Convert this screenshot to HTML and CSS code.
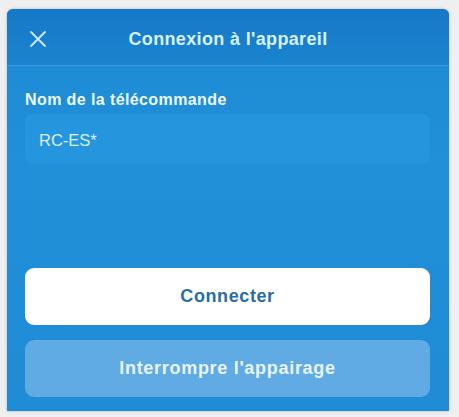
FILE: index.html
```html
<!DOCTYPE html>
<html lang="fr">
<head>
<meta charset="utf-8">
<link rel="stylesheet" href="styles.css">
</head>
<body>
<div class="panel">
  <header class="header">
    <button class="close" aria-label="Fermer">
      <svg width="18" height="18" viewBox="0 0 18 18"><path d="M2 2L16 16M16 2L2 16" stroke="#cfeaff" stroke-width="1.8" stroke-linecap="round"/></svg>
    </button>
    <h1 class="title">Connexion à l'appareil</h1>
  </header>
  <main class="body">
    <label class="label">Nom de la télécommande</label>
    <div class="field">RC-ES*</div>
    <div class="actions">
      <button class="btn btn-primary">Connecter</button>
      <button class="btn btn-secondary">Interrompre l'appairage</button>
    </div>
  </main>
</div>
</body>
</html>
```
FILE: styles.css
```css
* { box-sizing: border-box; }
html, body { margin: 0; padding: 0; }
body {
  width: 459px;
  height: 417px;
  background: #efefef;
  font-family: "Liberation Sans", Arial, sans-serif;
  padding: 9px 10px 6px 7px;
}
.panel {
  height: 402px;
  background: linear-gradient(#1d8ad5, #2190d8 40%, #1f8cd5);
  border-radius: 6px 6px 0 0;
  display: flex;
  flex-direction: column;
  overflow: hidden;
  box-shadow: 0 0 3px rgba(0,0,0,0.25);
}
.header {
  height: 57px;
  background: linear-gradient(#1679c8, #1a84cf);
  border-bottom: 1px solid #3b9ae0;
  display: flex;
  align-items: center;
  justify-content: center;
  position: relative;
}
.close {
  position: absolute;
  left: 22px;
  top: 21px;
  background: none;
  border: 0;
  padding: 0;
  width: 18px;
  height: 18px;
}
.title {
  margin: 0;
  font-size: 18px;
  font-weight: bold;
  color: #d8f1ff;
  letter-spacing: 0.35px;
  position: relative;
  top: 2px;
}
.body {
  flex: 1;
  padding: 25px 19px 14px 18px;
  display: flex;
  flex-direction: column;
}
.label {
  font-size: 16px;
  font-weight: bold;
  color: #eef8ff;
  line-height: 17px;
  letter-spacing: 0.4px;
}
.field {
  margin-top: 6px;
  height: 50px;
  border-radius: 8px;
  background: #2596dd;
  color: #dcf0ff;
  font-size: 16.5px;
  padding: 3px 14px 0;
  display: flex;
  align-items: center;
}
.actions {
  margin-top: auto;
  display: flex;
  flex-direction: column;
  gap: 15px;
}
.btn {
  height: 57px;
  border: 0;
  border-radius: 9px;
  font-family: inherit;
  font-size: 18px;
  font-weight: bold;
  width: 100%;
}
.btn-primary {
  background: #ffffff;
  color: #2a6da3;
  letter-spacing: 0.6px;
}
.btn-secondary {
  background: #60abe3;
  color: #e8f4fd;
  letter-spacing: 0.7px;
}
```
